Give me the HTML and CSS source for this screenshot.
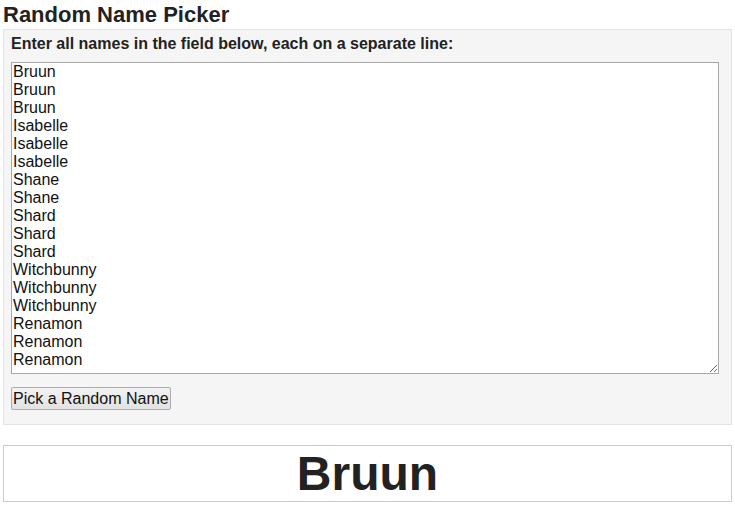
FILE: index.html
```html
<!DOCTYPE html>
<html lang="en">
<head>
    <meta charset="UTF-8">
    <meta name="viewport" content="width=device-width, initial-scale=1.0">
    <title>Random Name Picker</title>
    <link rel="stylesheet" href="styles.css">
</head>
<body>
    <h1>Random Name Picker</h1>

    <div class="picker">
        <label for="names">Enter all names in the field below, each on a separate line:</label>
        <textarea id="names">Bruun
Bruun
Bruun
Isabelle
Isabelle
Isabelle
Shane
Shane
Shard
Shard
Shard
Witchbunny
Witchbunny
Witchbunny
Renamon
Renamon
Renamon</textarea>
        <button onclick="pickName()">Pick a Random Name</button>
    </div>

    <div class="result" id="result">Bruun</div>

    <script>
        function pickName() {
            const names = document.getElementById('names').value
                .split('\n')
                .map(n => n.trim())
                .filter(n => n);
            if (!names.length) return;
            const pick = names[Math.floor(Math.random() * names.length)];
            document.getElementById('result').textContent = pick;
        }
    </script>
</body>
</html>
```

FILE: styles.css
```css
body {
    margin: 3px;
    font-family: "Liberation Sans", Arial, sans-serif;
    color: #222;
}
h1 {
    margin: -1px 0 0;
    font-size: 22px;
    line-height: 25px;
}
.picker {
    margin-top: 2px;
    padding: 5px 12px 14px 7px;
    background: #f5f5f5;
    border: 1px solid #e3e3e3;
}
label {
    display: block;
    font-weight: bold;
    font-size: 16px;
    line-height: 18px;
    margin-bottom: 9px;
}
textarea {
    display: block;
    box-sizing: border-box;
    width: 100%;
    height: 312px;
    margin: 0 0 13px;
    padding: 0 1px;
    border: 1px solid #a9a9a9;
    font-family: "Liberation Sans", Arial, sans-serif;
    font-size: 16px;
    line-height: 18px;
    color: #111;
    background: #fff;
}
button {
    display: block;
    height: 23px;
    padding: 0 1px;
    font-family: "Liberation Sans", Arial, sans-serif;
    font-size: 16px;
    line-height: 19px;
    color: #111;
    background: linear-gradient(#f2f2f2, #e2e2e2);
    border: 1px solid #adadad;
    border-radius: 2px;
}
button:hover {
    background: linear-gradient(#eaf6fd, #d9f0fc);
    border-color: #3c7fb1;
}
.result {
    margin-top: 20px;
    border: 1px solid #ccc;
    text-align: center;
    font-size: 48px;
    font-weight: bold;
    line-height: 55px;
}
```
